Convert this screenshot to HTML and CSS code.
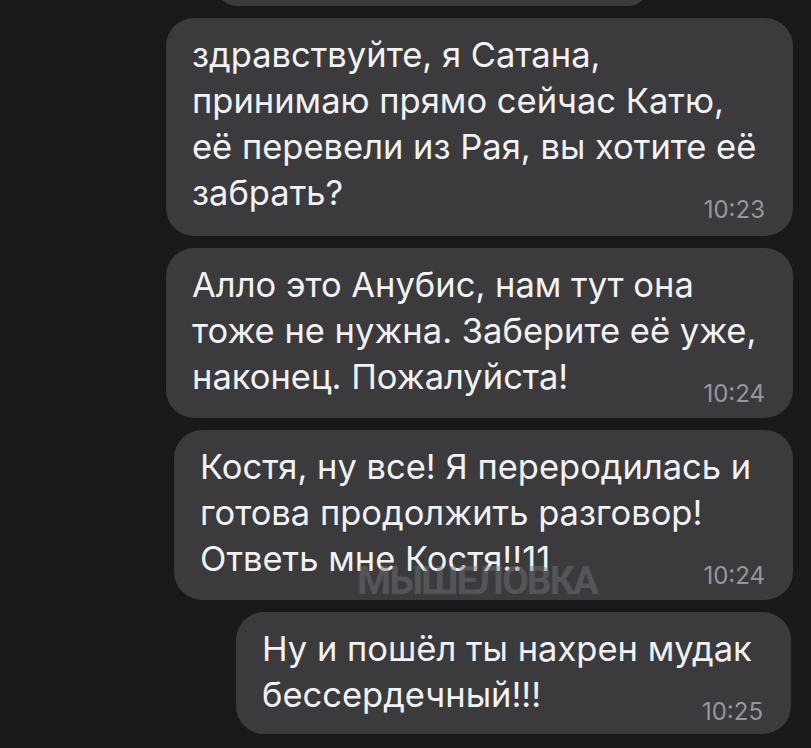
FILE: index.html
```html
<!DOCTYPE html>
<html lang="ru">
<head>
  <meta charset="UTF-8" />
  <title>Переписка</title>
  <link rel="stylesheet" href="styles.css">
</head>
<body>
  <div class="chat">
    <!-- previous message, cut off at the top -->
    <div class="bubble bubble-cut"></div>

    <div class="bubble w-627 tall">
      <p class="text">здравствуйте, я Сатана,<br>принимаю прямо сейчас Катю,<br>её перевели из Рая, вы хотите её<br>забрать?</p>
      <span class="time">10:23</span>
    </div>

    <div class="bubble w-627">
      <p class="text">Алло это Анубис, нам тут она<br>тоже не нужна. Заберите её уже,<br>наконец. Пожалуйста!</p>
      <span class="time">10:24</span>
    </div>

    <div class="bubble w-619">
      <p class="text">Костя, ну все! Я переродилась и<br>готова продолжить разговор!<br>Ответь мне Костя!!11</p>
      <span class="time">10:24</span>
      <span class="watermark">МЫШЕЛОВКА</span>
    </div>

    <div class="bubble w-555">
      <p class="text">Ну и пошёл ты нахрен мудак<br>бессердечный!!!</p>
      <span class="time">10:25</span>
    </div>
  </div>
</body>
</html>
```

FILE: styles.css
```css
* {
  box-sizing: border-box;
  margin: 0;
  padding: 0;
}

html, body {
  height: 100%;
  background: #19191b;
  overflow: hidden;
}

body {
  font-family: Inter, Roboto, "Liberation Sans", sans-serif;
  color: #f2f2f4;
}

.chat {
  display: flex;
  flex-direction: column;
  align-items: flex-end;
  gap: 12px;
  padding: 0 18px 0 0;
}

/* Message bubble */
.bubble {
  display: grid;
  position: relative;
  background: #3b3b3e;
  border-radius: 28px;
  padding: 14px 28px 18px 26px;
}

.bubble > .text,
.bubble > .time {
  grid-area: 1 / 1;
}

.bubble-cut {
  width: 431px;
  height: 40px;
  margin-top: -34px;
  margin-right: 145px;
}

.w-627 { width: 627px; }
.w-619 { width: 619px; }
.w-555 { width: 555px; margin-right: 2px; padding-bottom: 16px; }
.tall { padding-bottom: 20px; }

.text {
  font-size: 34.5px;
  line-height: 46px;
  white-space: nowrap;
}

.time {
  justify-self: end;
  align-self: end;
  font-size: 24px;
  line-height: 24px;
  color: #96969b;
  margin-bottom: -6px;
}

/* Channel watermark over the third bubble */
.watermark {
  position: absolute;
  left: 183px;
  bottom: -1px;
  font-family: Roboto, "Liberation Sans", sans-serif;
  font-weight: 700;
  font-size: 39px;
  line-height: 39px;
  color: rgba(118, 118, 124, 0.45);
  letter-spacing: -2px;
  pointer-events: none;
}
```
